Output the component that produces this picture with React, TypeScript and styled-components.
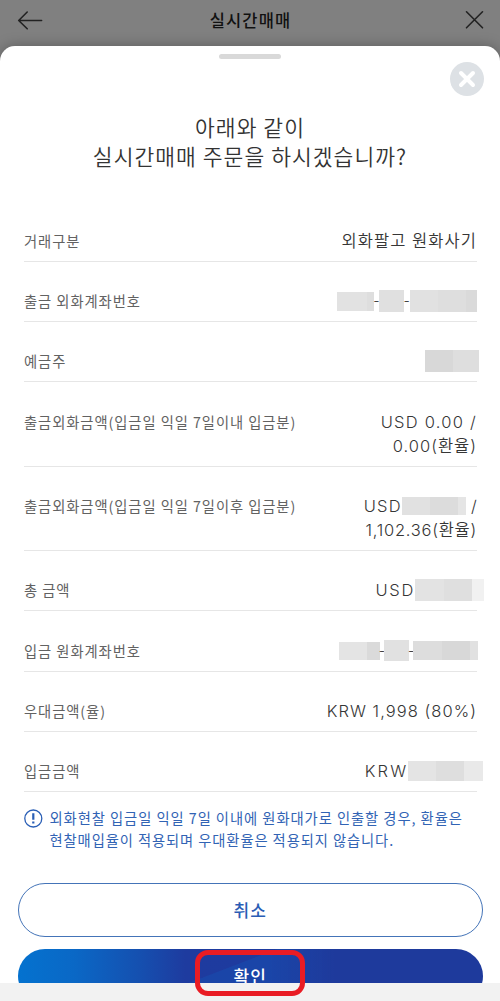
import React from "react";
import styled, { createGlobalStyle } from "styled-components";

const GlobalStyle = createGlobalStyle`
  * { box-sizing: border-box; }
  body { margin: 0; background: #f2f2f2; }
  button { font: inherit; border: 0; padding: 0; background: none; cursor: pointer; }
  p, h1, h2, dl, dt, dd { margin: 0; font-weight: inherit; }
`;

const Screen = styled.div`
  position: relative;
  width: 500px;
  height: 1001px;
  overflow: hidden;
  display: flex;
  flex-direction: column;
  background: #808080;
  font-family: "Noto Sans CJK KR", sans-serif;
`;

const Header = styled.header`
  flex: none;
  display: flex;
  align-items: center;
  justify-content: space-between;
  height: 45.5px;
  padding: 0 16px 6px 17px;
`;

const HeaderTitle = styled.h1`
  margin-right: 7px;
  color: #111;
  font-size: 16.5px;
  font-weight: 500;
  line-height: 24px;
  letter-spacing: 1.1px;
`;

const IconButton = styled.button`
  display: flex;
`;

const Sheet = styled.section`
  flex: none;
  height: 937px;
  overflow: hidden;
  display: flex;
  flex-direction: column;
  background: #fff;
  border-radius: 15px 15px 0 0;
`;

const SheetShadow = styled.div`
  flex: none;
  border-radius: 15px 15px 0 0;
  box-shadow: 0 0 14px rgba(0, 0, 0, 0.28);
`;

const Handle = styled.div`
  flex: none;
  width: 62px;
  height: 5px;
  margin: 8.5px auto 0;
  border-radius: 3px;
  background: #d9d9d9;
`;

const CloseRow = styled.div`
  flex: none;
  display: flex;
  justify-content: flex-end;
  padding: 2.5px 16px 0 0;
`;

const Question = styled.h2`
  flex: none;
  margin-top: 16.5px;
  text-align: center;
  color: #333;
  font-size: 21.5px;
  font-weight: 350;
  line-height: 29px;
  letter-spacing: 1.05px;
`;

const Details = styled.dl`
  flex: none;
  margin: 31.5px 23px 0 24px;
`;

const Row = styled.div`
  display: flex;
  justify-content: space-between;
  padding: 27.3px 0 8px;
  border-bottom: 1px solid #e6e6e6;
  line-height: 24px;
`;

const Label = styled.dt`
  color: #626262;
  font-size: 14.3px;
  letter-spacing: 0.93px;
  white-space: nowrap;
`;

const Value = styled.dd<{ $overhang?: number }>`
  display: flex;
  flex-direction: column;
  align-items: flex-end;
  margin-right: ${(p) => -(p.$overhang ?? 0)}px;
  color: #363636;
  font-family: Inter, "Noto Sans CJK KR", sans-serif;
  font-size: 16.5px;
  font-weight: 350;
  white-space: nowrap;
`;

const Line = styled.div`
  display: flex;
  align-items: center;
  height: 24px;
`;

const Txt = styled.span<{ $spacing?: number; $gap?: number }>`
  letter-spacing: ${(p) => p.$spacing ?? 0}px;
  margin-right: ${(p) => p.$gap ?? 0}px;
`;

const Dash = styled.span<{ $width: number }>`
  display: flex;
  align-items: center;
  justify-content: center;
  width: ${(p) => p.$width}px;
  font-size: 14px;
`;

const MaskBox = styled.span<{ $height: number }>`
  display: flex;
  height: ${(p) => p.$height}px;
`;

const MaskPart = styled.span<{ $width: number; $tone: string }>`
  width: ${(p) => p.$width}px;
  background: ${(p) => p.$tone};
`;

const Notice = styled.div`
  flex: none;
  display: flex;
  gap: 6.5px;
  padding: 14.5px 0 0 24px;
  color: #3163b4;
  font-size: 14.3px;
  line-height: 22.7px;
  white-space: nowrap;
`;

const NoticeLine = styled.p<{ $spacing: number }>`
  letter-spacing: ${(p) => p.$spacing}px;
`;

const NoticeIcon = styled.svg`
  flex: none;
  margin-top: 2px;
`;

const Actions = styled.div`
  flex: none;
  display: flex;
  flex-direction: column;
  gap: 12px;
  padding: 31px 17px 0 17.5px;
`;

const ActionButton = styled.button<{ $primary?: boolean }>`
  height: 54px;
  border-radius: 27px;
  border: ${(p) => (p.$primary ? "0" : "1px solid #4474b8")};
  background: ${(p) =>
    p.$primary
      ? `linear-gradient(90deg, rgba(30, 58, 156, 0) 54%, #1e3a9c 68%),
         linear-gradient(159deg, transparent 42.6%, #1a45a8 43%),
         linear-gradient(90deg, #0472cf 0%, #0a68c6 12%, #1550b0 26%, #1e3b9f 36%, #1e3a9c 100%)`
      : "#fff"};
  color: ${(p) => (p.$primary ? "#fff" : "#2a5db5")};
  font-size: 17px;
  font-weight: 500;
  letter-spacing: 1.2px;
  line-height: 52px;
`;

const BottomBar = styled.div`
  flex: 1;
  background: #f2f2f2;
`;

const Highlight = styled.div`
  position: absolute;
  left: 195px;
  top: 949.5px;
  width: 110px;
  height: 46.5px;
  border: 5px solid #e91c24;
  border-radius: 13px;
`;

type Part = [number, string];

function Mask({ height, parts }: { height: number; parts: Part[] }) {
  return (
    <MaskBox $height={height}>
      {parts.map(([width, tone], i) => (
        <MaskPart key={i} $width={width} $tone={tone} />
      ))}
    </MaskBox>
  );
}

export default function App() {
  return (
    <Screen>
      <GlobalStyle />
      <Header>
        <IconButton aria-label="뒤로">
          <svg width="26" height="20" viewBox="0 0 26 20" fill="none" stroke="#222" strokeWidth="1.6" strokeLinecap="round" strokeLinejoin="round">
            <path d="M10.2 2 1.7 10.5l8.5 8.3M1.7 10.5H24.6" />
          </svg>
        </IconButton>
        <HeaderTitle>실시간매매</HeaderTitle>
        <IconButton aria-label="닫기">
          <svg width="19" height="19" viewBox="0 0 19 19" fill="none" stroke="#222" strokeWidth="1.6" strokeLinecap="round">
            <path d="m1.5 1.8 16 16M17.5 1.8l-16 16" />
          </svg>
        </IconButton>
      </Header>
      <SheetShadow>
        <Sheet>
          <Handle />
          <CloseRow>
            <IconButton aria-label="팝업 닫기">
              <svg width="34" height="34" viewBox="0 0 34 34">
                <circle cx="17" cy="17" r="17" fill="#dde1e5" />
                <path d="m11 11 12 12M23 11 11 23" stroke="#fff" strokeWidth="4" strokeLinecap="round" />
              </svg>
            </IconButton>
          </CloseRow>
          <Question>
            아래와 같이
            <br />
            실시간매매 주문을 하시겠습니까?
          </Question>
          <Details>
            <Row>
              <Label>거래구분</Label>
              <Value>
                <Line><Txt $spacing={1.05}>외화팔고 원화사기</Txt></Line>
              </Value>
            </Row>
            <Row>
              <Label>출금 외화계좌번호</Label>
              <Value>
                <Line>
                  <Mask height={19} parts={[[30, "#e2e2e2"], [7.5, "#dedede"]]} />
                  <Dash $width={5}>-</Dash>
                  <Mask height={22} parts={[[24.5, "#e0e0e0"]]} />
                  <Dash $width={6.5}>-</Dash>
                  <Mask height={22.5} parts={[[28, "#e1e1e1"], [28, "#dedede"], [11, "#dadada"]]} />
                </Line>
              </Value>
            </Row>
            <Row>
              <Label>예금주</Label>
              <Value $overhang={2.3}>
                <Line><Mask height={22} parts={[[28, "#d8d8d8"], [26.6, "#dedede"]]} /></Line>
              </Value>
            </Row>
            <Row>
              <Label>출금외화금액(입금일 익일 7일이내 입금분)</Label>
              <Value>
                <Line><Txt $spacing={1.25}>USD 0.00 /</Txt></Line>
                <Line><Txt $spacing={1}>0.00(환율)</Txt></Line>
              </Value>
            </Row>
            <Row>
              <Label>출금외화금액(입금일 익일 7일이후 입금분)</Label>
              <Value>
                <Line>
                  <Txt $spacing={1.2} $gap={0}>USD</Txt>
                  <Mask height={18.5} parts={[[28, "#e1e1e1"], [28, "#dcdcdc"], [8.6, "#e5e5e5"]]} />
                  <Txt $gap={0.3}>&nbsp;/</Txt>
                </Line>
                <Line><Txt $spacing={0.75}>1,102.36(환율)</Txt></Line>
              </Value>
            </Row>
            <Row>
              <Label>총 금액</Label>
              <Value $overhang={6.5}>
                <Line>
                  <Txt $spacing={1.7} $gap={0}>USD</Txt>
                  <Mask height={22} parts={[[28.5, "#e3e3e3"], [28.5, "#dfdfdf"], [11.5, "#f1f1f1"]]} />
                </Line>
              </Value>
            </Row>
            <Row>
              <Label>입금 원화계좌번호</Label>
              <Value $overhang={0.7}>
                <Line>
                  <Mask height={18} parts={[[28, "#e4e4e4"], [12.7, "#dadada"]]} />
                  <Dash $width={4.5}>-</Dash>
                  <Mask height={21} parts={[[25, "#e1e1e1"]]} />
                  <Dash $width={4}>-</Dash>
                  <Mask height={19} parts={[[28.5, "#dddddd"], [28, "#d8d8d8"], [8, "#e1e1e1"]]} />
                </Line>
              </Value>
            </Row>
            <Row>
              <Label>우대금액(율)</Label>
              <Value>
                <Line><Txt $spacing={1.05}>KRW 1,998 (80%)</Txt></Line>
              </Value>
            </Row>
            <Row>
              <Label>입금금액</Label>
              <Value $overhang={6}>
                <Line>
                  <Txt $spacing={2.1} $gap={-0.7}>KRW</Txt>
                  <Mask height={20} parts={[[28, "#e4e4e4"], [28.5, "#dedede"], [19, "#e9e9e9"]]} />
                </Line>
              </Value>
            </Row>
          </Details>
          <Notice>
            <NoticeIcon width="19" height="19" viewBox="0 0 19 19" fill="none" stroke="#2a5fb6">
              <circle cx="9.3" cy="9.5" r="8.5" strokeWidth="1.3" />
              <path d="M9.3 4.2v6.6M9.3 12.6v2" strokeWidth="2.2" />
            </NoticeIcon>
            <div>
              <NoticeLine $spacing={0.94}>외화현찰 입금일 익일 7일 이내에 원화대가로 인출할 경우, 환율은</NoticeLine>
              <NoticeLine $spacing={0.9}>현찰매입율이 적용되며 우대환율은 적용되지 않습니다.</NoticeLine>
            </div>
          </Notice>
          <Actions>
            <ActionButton>취소</ActionButton>
            <ActionButton $primary>확인</ActionButton>
          </Actions>
        </Sheet>
      </SheetShadow>
      <BottomBar />
      <Highlight />
    </Screen>
  );
}
